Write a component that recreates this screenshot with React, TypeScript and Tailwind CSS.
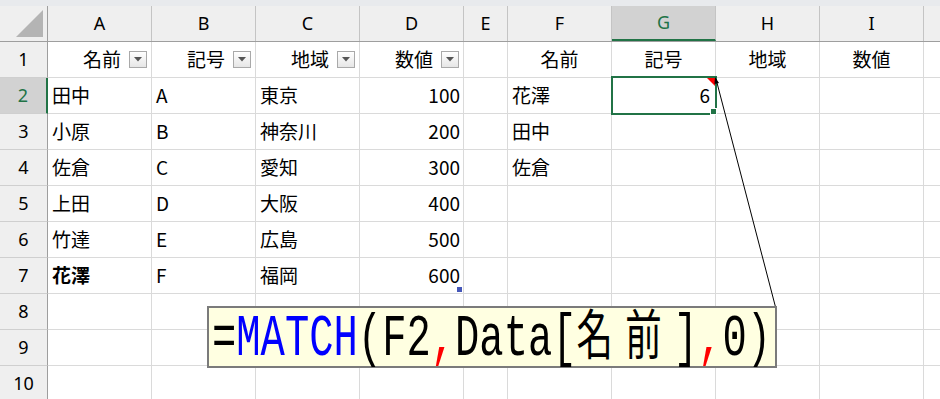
const colWidths = ['w-[104px]', 'w-[104px]', 'w-[104px]', 'w-[104px]', 'w-[44px]', 'w-[104px]', 'w-[104px]', 'w-[104px]', 'w-[104px]'];
const letters = ['A', 'B', 'C', 'D', 'E', 'F', 'G', 'H', 'I'];

type Cell = { text?: string; align?: 'left' | 'right' | 'center'; bold?: boolean; filter?: boolean };

const rows: Cell[][] = [
  [
    { text: '名前', align: 'right', filter: true },
    { text: '記号', align: 'right', filter: true },
    { text: '地域', align: 'right', filter: true },
    { text: '数値', align: 'right', filter: true },
    {},
    { text: '名前', align: 'center' },
    { text: '記号', align: 'center' },
    { text: '地域', align: 'center' },
    { text: '数値', align: 'center' },
  ],
  [{ text: '田中' }, { text: 'A' }, { text: '東京' }, { text: '100', align: 'right' }, {}, { text: '花澤' }, { text: '6', align: 'right' }, {}, {}],
  [{ text: '小原' }, { text: 'B' }, { text: '神奈川' }, { text: '200', align: 'right' }, {}, { text: '田中' }, {}, {}, {}],
  [{ text: '佐倉' }, { text: 'C' }, { text: '愛知' }, { text: '300', align: 'right' }, {}, { text: '佐倉' }, {}, {}, {}],
  [{ text: '上田' }, { text: 'D' }, { text: '大阪' }, { text: '400', align: 'right' }, {}, {}, {}, {}, {}],
  [{ text: '竹達' }, { text: 'E' }, { text: '広島' }, { text: '500', align: 'right' }, {}, {}, {}, {}, {}],
  [{ text: '花澤', bold: true }, { text: 'F' }, { text: '福岡' }, { text: '600', align: 'right' }, {}, {}, {}, {}, {}],
  [{}, {}, {}, {}, {}, {}, {}, {}, {}],
  [{}, {}, {}, {}, {}, {}, {}, {}, {}],
  [{}, {}, {}, {}, {}, {}, {}, {}, {}],
];

function FilterButton() {
  return (
    <div className="ml-[8px] mr-[1px] flex h-[17px] w-[18px] shrink-0 items-center justify-center border border-[#a9a9a9] bg-gradient-to-b from-white to-[#e6e6e6]">
      <svg width="8" height="5" viewBox="0 0 8 5">
        <path d="M0 0 L8 0 L4 4.5 Z" fill="#555" />
      </svg>
    </div>
  );
}

export default function App() {
  return (
    <div className="relative h-[399px] w-[940px] overflow-hidden bg-white text-[19px] text-black" style={{ fontFamily: '"Noto Sans CJK JP", "Noto Sans", sans-serif' }}>
      <div className="h-[6px] bg-[#e8eaed]" />

      {/* column headers */}
      <div className="flex h-[36px] border-b border-[#9e9e9e] bg-[#efefef] text-[18px]">
        <div className="relative w-[48px] shrink-0 border-r border-[#9e9e9e]">
          <svg className="absolute left-[16px] top-[4px]" width="28" height="28" viewBox="0 0 28 28">
            <path d="M27 0 L27 27 L0 27 Z" fill="#b4b4b4" />
          </svg>
        </div>
        {letters.map((l, i) => (
          <div
            key={l}
            className={`${colWidths[i]} flex shrink-0 items-center justify-center border-r border-[#c4c4c4] ${
              l === 'G' ? 'border-b-2 border-b-[#217346] bg-[#d2d2d2] text-[#217346]' : ''
            }`}
            style={{ fontFamily: '"Noto Sans", sans-serif' }}
          >
            {l}
          </div>
        ))}
        <div className="flex-1" />
      </div>

      {rows.map((row, r) => (
        <div key={r} className="flex h-[36px]">
          <div
            className={`flex w-[48px] shrink-0 items-center justify-center border-b border-r border-b-[#cfcfcf] border-r-[#9e9e9e] text-[18px] ${
              r === 1 ? 'border-r-2 border-r-[#217346] bg-[#d2d2d2] text-[#217346]' : 'bg-[#efefef]'
            }`}
            style={{ fontFamily: '"Noto Sans", sans-serif' }}
          >
            {r + 1}
          </div>
          {row.map((c, i) => (
            <div
              key={i}
              className={`${colWidths[i]} relative flex shrink-0 items-center overflow-hidden whitespace-nowrap border-b border-r border-[#dadada] ${
                c.align === 'right' ? 'justify-end pr-[3px]' : c.align === 'center' ? 'justify-center' : 'pl-[4px]'
              } ${c.bold ? 'font-bold' : ''} ${r === 1 && i === 6 ? 'pr-[5px]' : ''}`}
            >
              {c.text}
              {c.filter && <FilterButton />}
              {r === 6 && i === 3 && <div className="absolute bottom-[1px] right-[1px] h-[5px] w-[5px] bg-[#4557b8]" />}
            </div>
          ))}
          <div className="flex-1 border-b border-[#dadada]" />
        </div>
      ))}

      {/* selected cell G2 */}
      <div className="absolute left-[611px] top-[76px] h-[39px] w-[106px] border-2 border-[#217346]" />
      <div className="absolute left-[710px] top-[108px] h-[7px] w-[7px] border border-white bg-[#217346]" />
      <svg className="pointer-events-none absolute left-0 top-0" width="940" height="399">
        <path d="M707 78 L715 78 L715 86 Z" fill="#ff0000" />
        <line x1="716" y1="79" x2="775.5" y2="307" stroke="#000" strokeWidth="1" />
        <path d="M715 77 L719 83 L714.5 84 Z" fill="#000" />
      </svg>

      {/* comment box */}
      <div className="absolute left-[207px] top-[306px] flex h-[62px] w-[570px] items-center border-2 border-[#7b7b7b] bg-[#ffffe1] pl-[3px]">
        <div className="w-[840px] shrink-0 origin-left scale-x-[0.675] whitespace-nowrap text-[60px] leading-none" style={{ fontFamily: '"Liberation Mono", monospace' }}>
          <span>=</span>
          <span className="text-[#0000ff]">MATCH</span>
          <span>(F2</span>
          <span className="text-[#ff0000]">,</span>
          <span>Data[</span>
          <span className="text-[54px] tracking-[18px]" style={{ fontFamily: '"Noto Sans CJK JP", sans-serif' }}>名前</span>
          <span>]</span>
          <span className="text-[#ff0000]">,</span>
          <span>0)</span>
        </div>
      </div>
    </div>
  );
}
